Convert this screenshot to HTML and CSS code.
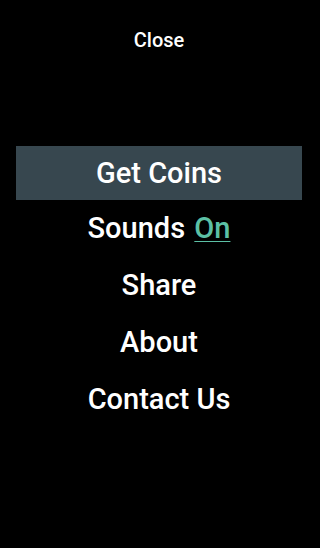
FILE: index.html
```html
<!DOCTYPE html>
<html lang="en">
<head>
<meta charset="UTF-8" />
<meta name="viewport" content="width=device-width, initial-scale=1.0"/>
<title>Menu</title>
<link rel="stylesheet" href="styles.css">
</head>
<body>
<div class="close">Close</div>
<ul class="menu">
    <li class="item selected">Get Coins</li>
    <li class="item">Sounds <span class="toggle">On</span></li>
    <li class="item">Share</li>
    <li class="item">About</li>
    <li class="item">Contact Us</li>
</ul>
</body>
</html>
```
FILE: styles.css
```css
body {
    margin: 0;
    background-color: #000;
    color: #fff;
    font-family: Roboto, "Noto Sans", sans-serif;
    font-weight: 500;
    text-align: center;
}
.close {
    font-size: 20px;
    padding-top: 28px;
    line-height: 24px;
    padding-right: 2px;
}
.menu {
    list-style: none;
    margin: 94px 18px 0 16px;
    padding: 0;
}
.item {
    font-size: 29px;
    height: 57px;
    line-height: 57px;
}
.item.selected {
    background-color: #37474f;
    height: 54px;
    line-height: 54px;
}
.toggle {
    color: #5cc0a5;
    margin-left: 2px;
    text-decoration: underline;
    text-decoration-thickness: 1px;
    text-underline-offset: 3px;
}
```
